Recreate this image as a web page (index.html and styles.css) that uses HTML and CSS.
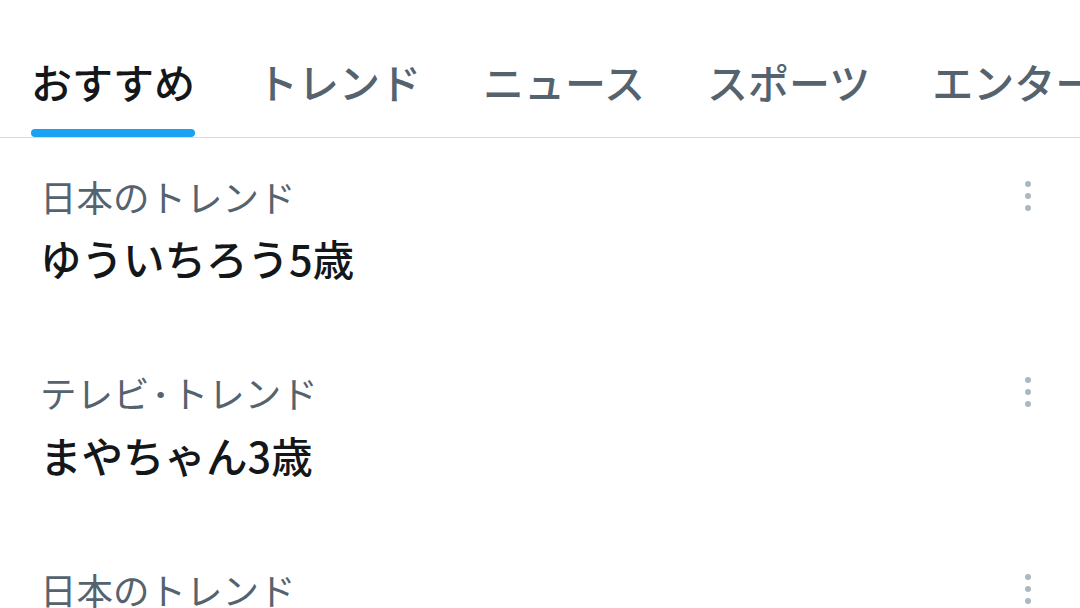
FILE: index.html
```html
<!DOCTYPE html>
<html lang="ja">
<head>
  <meta charset="UTF-8" />
  <meta name="viewport" content="width=device-width, initial-scale=1.0"/>
  <title>話題を検索</title>
  <link rel="stylesheet" href="styles.css">
</head>
<body>
  <div class="explore">
    <nav class="tabs">
      <div class="tab active"><span class="tab-label">おすすめ</span><span class="bar"></span></div>
      <div class="tab"><span class="tab-label">トレンド</span><span class="bar"></span></div>
      <div class="tab"><span class="tab-label">ニュース</span><span class="bar"></span></div>
      <div class="tab"><span class="tab-label">スポーツ</span><span class="bar"></span></div>
      <div class="tab"><span class="tab-label">エンターテイメント</span><span class="bar"></span></div>
    </nav>

    <div class="trend">
      <div class="trend-text">
        <div class="trend-context">日本のトレンド</div>
        <div class="trend-name">ゆういちろう5歳</div>
      </div>
      <svg class="more" width="8" height="30" viewBox="0 0 8 30"><circle cx="4" cy="3" r="3"/><circle cx="4" cy="15" r="3"/><circle cx="4" cy="27" r="3"/></svg>
    </div>

    <div class="trend">
      <div class="trend-text">
        <div class="trend-context">テレビ<span class="sep">·</span>トレンド</div>
        <div class="trend-name">まやちゃん3歳</div>
      </div>
      <svg class="more" width="8" height="30" viewBox="0 0 8 30"><circle cx="4" cy="3" r="3"/><circle cx="4" cy="15" r="3"/><circle cx="4" cy="27" r="3"/></svg>
    </div>

    <div class="trend">
      <div class="trend-text">
        <div class="trend-context">日本のトレンド</div>
        <div class="trend-name">たけのこ派</div>
      </div>
      <svg class="more" width="8" height="30" viewBox="0 0 8 30"><circle cx="4" cy="3" r="3"/><circle cx="4" cy="15" r="3"/><circle cx="4" cy="27" r="3"/></svg>
    </div>
  </div>
</body>
</html>
```

FILE: styles.css
```css
:root {
  --text: #14171a;
  --muted: #55636f;
  --accent: #1da1f2;
  --line: #d4dde2;
  --dots: #aab8c2;
}

body {
  margin: 0;
  background: #fff;
  color: var(--text);
  font-family: "Noto Sans CJK JP", "Noto Sans", sans-serif;
  overflow: hidden;
}

.explore {
  width: 1080px;
  height: 608px;
  overflow: hidden;
}

.tabs {
  display: flex;
  gap: 62px;
  padding: 0 31px;
  border-bottom: 1px solid var(--line);
  white-space: nowrap;
}

.tab {
  display: flex;
  flex-direction: column;
  padding-top: 57px;
  color: var(--muted);
  font-size: 41px;
  font-weight: 500;
  line-height: 48px;
}

.tab.active {
  color: var(--text);
}

.bar {
  height: 8px;
  margin-top: 24px;
  border-radius: 4px;
}

.tab.active .bar {
  background: var(--accent);
}

.trend {
  display: flex;
  justify-content: space-between;
  align-items: flex-start;
  padding: 38px 48px 52px 40px;
}

.trend-context {
  font-size: 36.5px;
  line-height: 42px;
  color: var(--muted);
}

.sep {
  padding: 0 6px;
  font-family: "Noto Sans", sans-serif;
  font-weight: 700;
}

.trend-name {
  margin-top: 16px;
  font-size: 41.5px;
  line-height: 48px;
  font-weight: 500;
}

.more {
  margin-top: 5px;
  fill: var(--dots);
}
```
